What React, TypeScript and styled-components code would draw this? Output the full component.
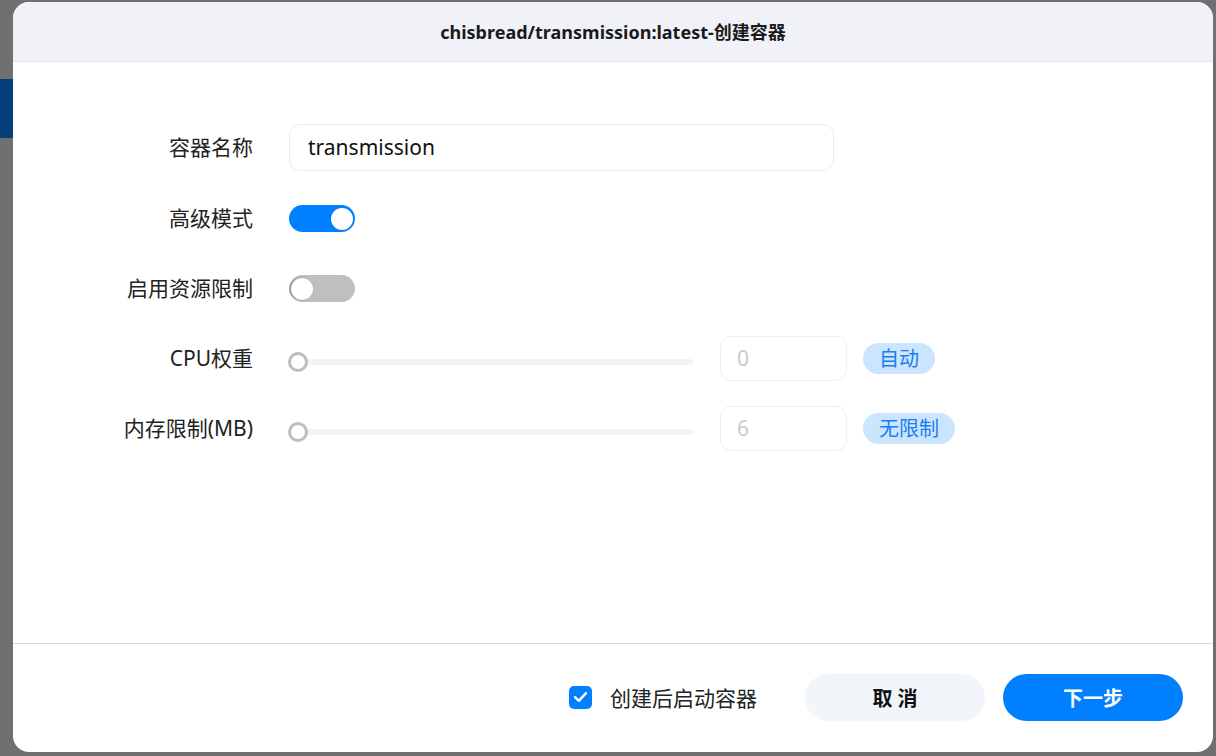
import React, { FC } from "react";
import styled, { createGlobalStyle } from "styled-components";

const GlobalStyle = createGlobalStyle`
  html, body {
    margin: 0;
    padding: 0;
    background: #707070;
    font-family: "Noto Sans", "Noto Sans CJK SC", sans-serif;
  }
  * { box-sizing: border-box; }
`;

const Backdrop = styled.div`
  position: relative;
  width: 1216px;
  height: 756px;
  background: #707070;
  padding: 2px 3px 4px 13px;
  overflow: hidden;
`;

/* piece of the app behind the overlay */
const BehindStrip = styled.div`
  position: absolute;
  left: 0;
  top: 79px;
  width: 13px;
  height: 59px;
  background: #063f7c;
`;

const Dialog = styled.div`
  position: relative;
  width: 1200px;
  height: 750px;
  background: #fff;
  border-radius: 16px;
  overflow: hidden;
  display: flex;
  flex-direction: column;
`;

const Header = styled.div`
  height: 60px;
  flex: none;
  background: #f1f2f7;
  border-bottom: 1px solid #e3e5eb;
  display: flex;
  align-items: center;
  justify-content: center;
  padding-bottom: 1px;
  font-size: 18px;
  font-weight: 700;
  color: #1a1a1a;
`;

const Content = styled.div`
  flex: 1;
  padding-top: 62px;
  display: flex;
  flex-direction: column;
  gap: 25px;
`;

const Row = styled.div<{ $h?: number }>`
  display: grid;
  grid-template-columns: 240px 1fr;
  column-gap: 36px;
  align-items: center;
  height: ${(p) => p.$h ?? 45}px;
`;

const Label = styled.div`
  text-align: right;
  font-size: 21px;
  color: #222;
  white-space: nowrap;
  padding-bottom: 3px;
`;

const Controls = styled.div`
  display: flex;
  align-items: center;
`;

const TextInput = styled.div`
  width: 545px;
  height: 47px;
  border: 1px solid #ebebeb;
  border-radius: 11px;
  padding-left: 18px;
  padding-bottom: 2px;
  display: flex;
  align-items: center;
  font-size: 21px;
  color: #111;
`;

const Toggle = styled.div<{ $on: boolean }>`
  position: relative;
  width: 66px;
  height: 27px;
  border-radius: 14px;
  background: ${(p) => (p.$on ? "#0080ff" : "#bfbfbf")};
  &::after {
    content: "";
    position: absolute;
    top: 2.5px;
    left: ${(p) => (p.$on ? "42px" : "2px")};
    width: 22px;
    height: 22px;
    border-radius: 50%;
    background: #fff;
    box-shadow: ${(p) => (p.$on ? "none" : "-1px 0 2px rgba(0,0,0,0.35)")};
  }
`;

const Slider = styled.div`
  position: relative;
  width: 404px;
  height: 20px;
  margin-top: 7px;
  display: flex;
  align-items: center;
  padding-left: 8px;
`;

const Track = styled.div`
  width: 100%;
  height: 6px;
  border-radius: 3px;
  background: #f0f3f8;
`;

const Thumb = styled.div`
  position: absolute;
  left: -1px;
  top: 0;
  width: 20px;
  height: 20px;
  border-radius: 50%;
  border: 3px solid #bdbdbd;
  background: #fff;
`;

const NumberBox = styled.div`
  margin-left: 27px;
  width: 127px;
  height: 45px;
  border: 1px solid #eeeef2;
  border-radius: 11px;
  padding-left: 16px;
  padding-bottom: 2px;
  display: flex;
  align-items: center;
  font-size: 21px;
  color: #c8c9d3;
`;

const Badge = styled.span`
  margin-left: 16px;
  height: 31px;
  padding: 0 16px 2px;
  border-radius: 16px;
  background: #cce5ff;
  color: #1a7fec;
  font-size: 20px;
  display: inline-flex;
  align-items: center;
`;

const Footer = styled.div`
  height: 109px;
  flex: none;
  border-top: 1px solid #dadada;
  display: flex;
  align-items: center;
  justify-content: flex-end;
  padding-right: 30px;
  padding-bottom: 2px;
`;

const CheckLabel = styled.label`
  display: flex;
  align-items: center;
  gap: 18px;
  font-size: 21px;
  color: #222;
  margin-right: 48px;
`;

const CheckBox = styled.span`
  width: 23px;
  height: 23px;
  border-radius: 5px;
  background: #0080ff;
  display: inline-flex;
  align-items: center;
  justify-content: center;
`;

const Button = styled.button<{ $primary?: boolean }>`
  width: 180px;
  height: 47px;
  border: none;
  border-radius: 24px;
  background: ${(p) => (p.$primary ? "#0080ff" : "#f2f5f9")};
  color: ${(p) => (p.$primary ? "#fff" : "#111")};
  font-family: inherit;
  font-size: 20px;
  font-weight: 700;
  & + & {
    margin-left: 18px;
  }
`;

interface ISliderRowProps {
  label: string;
  value: string;
  badge: string;
}

const SliderRow: FC<ISliderRowProps> = ({ label, value, badge }) => (
  <Row>
    <Label>{label}</Label>
    <Controls>
      <Slider>
        <Track />
        <Thumb />
      </Slider>
      <NumberBox>{value}</NumberBox>
      <Badge>{badge}</Badge>
    </Controls>
  </Row>
);

export default function App() {
  return (
    <>
      <GlobalStyle />
      <Backdrop>
        <BehindStrip />
        <Dialog>
          <Header>chisbread/transmission:latest-创建容器</Header>
          <Content>
            <Row $h={47}>
              <Label>容器名称</Label>
              <Controls>
                <TextInput>transmission</TextInput>
              </Controls>
            </Row>
            <Row>
              <Label>高级模式</Label>
              <Controls>
                <Toggle $on />
              </Controls>
            </Row>
            <Row>
              <Label>启用资源限制</Label>
              <Controls>
                <Toggle $on={false} />
              </Controls>
            </Row>
            <SliderRow label="CPU权重" value="0" badge="自动" />
            <SliderRow label="内存限制(MB)" value="6" badge="无限制" />
          </Content>
          <Footer>
            <CheckLabel>
              <CheckBox>
                <svg width="15" height="12" viewBox="0 0 15 12" fill="none">
                  <path d="M2 6.2 L5.8 9.8 L13 2.2" stroke="#fff" strokeWidth="2.4" strokeLinecap="round" strokeLinejoin="round" />
                </svg>
              </CheckBox>
              创建后启动容器
            </CheckLabel>
            <Button>取 消</Button>
            <Button $primary>下一步</Button>
          </Footer>
        </Dialog>
      </Backdrop>
    </>
  );
}
